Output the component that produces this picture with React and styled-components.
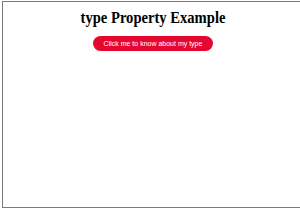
import React from "react";
import styled, { createGlobalStyle } from "styled-components";

const Global = createGlobalStyle`
  html, body { margin: 0; padding: 0; background: #fff; overflow: hidden; }
`;

const Frame = styled.div`
  margin: 1px 0 0 2px;
  width: 310px;
  height: 207px;
  border: 1.5px solid #7a7a7a;
  box-sizing: border-box;
  display: flex;
  flex-direction: column;
  align-items: center;
  padding: 7px 8px 0 0;
`;

const Title = styled.h1`
  margin: 0;
  font-family: "Liberation Serif", serif;
  font-weight: bold;
  font-size: 14.6px;
  line-height: 19px;
  color: #000;
  transform: scaleY(1.1);
`;

const Button = styled.button`
  margin-top: 8px;
  width: 120px;
  height: 15px;
  border: none;
  border-radius: 8px;
  background: #e5072f;
  color: #fff;
  font-family: "Liberation Sans", Arial, sans-serif;
  font-size: 7px;
  padding: 0;
  cursor: pointer;
`;

export default function App() {
  return (
    <>
      <Global />
      <Frame>
        <Title>type Property Example</Title>
        <Button type="button">Click me to know about my type</Button>
      </Frame>
    </>
  );
}
